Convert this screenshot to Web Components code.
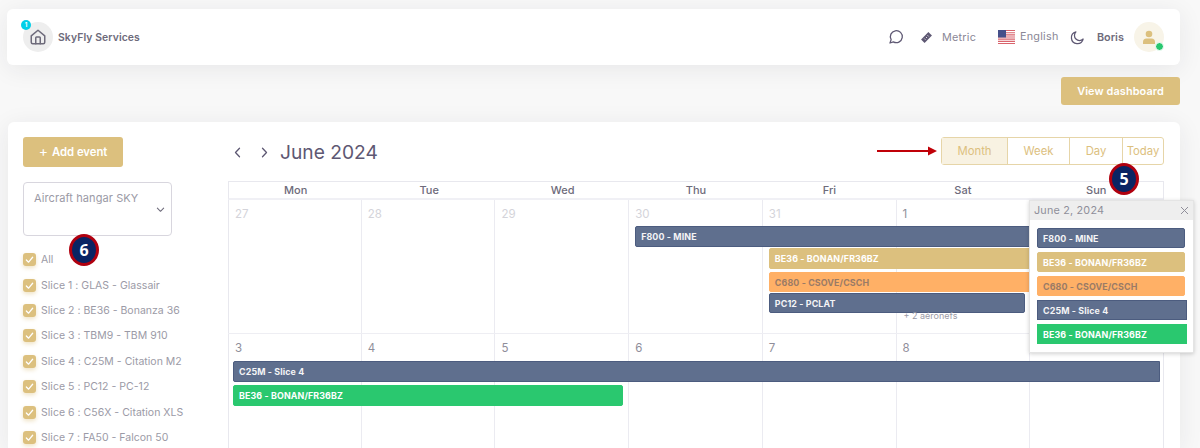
<!DOCTYPE html>
<html><head><meta charset="utf-8">
<style>
html,body{margin:0;height:448px;overflow:hidden;background:#f8f8f8}
body{font-family:Inter,"Liberation Sans",sans-serif;color:#6e6b7b;position:relative}
page-shell{display:block}
</style></head><body>
<page-shell>
  <top-nav></top-nav>
  <dash-action>View dashboard</dash-action>
  <main-card>
    <side-filter slot="side">
      <check-item>All</check-item>
      <check-item>Slice 1 : GLAS - Glassair</check-item>
      <check-item>Slice 2 : BE36 - Bonanza 36</check-item>
      <check-item>Slice 3 : TBM9 - TBM 910</check-item>
      <check-item>Slice 4 : C25M - Citation M2</check-item>
      <check-item>Slice 5 : PC12 - PC-12</check-item>
      <check-item>Slice 6 : C56X - Citation XLS</check-item>
      <check-item>Slice 7 : FA50 - Falcon 50</check-item>
    </side-filter>
    <cal-toolbar slot="main"></cal-toolbar>
    <cal-head slot="main"></cal-head>
    <cal-week slot="main" days="27,28,29,30,31,1," muted="5" rows="26px 22px 24px 21px 22px 18px 1fr" h="134">
      <cal-event col="4" end="8" row="2" kind="navy" l="6">F800 - MINE</cal-event>
      <cal-event col="5" end="8" row="3" kind="gold" l="6">BE36 - BONAN/FR36BZ</cal-event>
      <cal-event col="5" end="8" row="4" kind="orange" l="6">C680 - CSOVE/CSCH</cal-event>
      <cal-event col="5" end="7" row="5" kind="navy" l="6" r="5" round="1">PC12 - PCLAT</cal-event>
      <more-link col="6" row="6">+ 2 aéronefs</more-link>
    </cal-week>
    <cal-week slot="main" days="3,4,5,6,7,8," muted="0" rows="27px 24px 24px 1fr" h="140">
      <cal-event col="1" end="8" row="2" kind="navy" l="5" r="4">C25M - Slice 4</cal-event>
      <cal-event col="1" end="4" row="3" kind="green" l="5" r="6" round="1">BE36 - BONAN/FR36BZ</cal-event>
    </cal-week>
  </main-card>
</page-shell>
<red-arrow></red-arrow>
<num-badge style="left:1109px;top:163px">5</num-badge>
<num-badge style="left:69px;top:234px">6</num-badge>
<day-popover>
  <cal-event kind="navy" round="1" pop="1">F800 - MINE</cal-event>
  <cal-event kind="gold" round="1" pop="1">BE36 - BONAN/FR36BZ</cal-event>
  <cal-event kind="orange" round="1" pop="1">C680 - CSOVE/CSCH</cal-event>
  <cal-event kind="navy" pop="1" wide="1">C25M - Slice 4</cal-event>
  <cal-event kind="green" pop="1" wide="1">BE36 - BONAN/FR36BZ</cal-event>
</day-popover>
<script>
const mk=(name,html)=>{
  class C extends HTMLElement{
    constructor(){super();this.attachShadow({mode:'open'}).innerHTML=html;}
  }
  customElements.define(name,C);
};
const FONT='Inter,"Liberation Sans",sans-serif';

mk('top-nav',`<style>
:host{display:flex;align-items:center;height:56px;margin:9px 20px 0 7px;background:#fff;border-radius:6px;box-shadow:0 4px 24px rgba(34,41,47,.08);padding:0 16px;box-sizing:content-box;width:1141px;font-size:11px}
.home{position:relative;width:30px;height:30px;border-radius:50%;background:#eee;display:flex;align-items:center;justify-content:center}
.dot1{position:absolute;left:-2px;top:-2px;width:10px;height:10px;border-radius:50%;background:#00cfe8;color:#fff;font:700 6px/10px ${FONT};text-align:center}
.brand{margin-left:5px;font-weight:600;font-size:10.4px;color:#6e6b7b;letter-spacing:.1px}
.r{margin-left:auto;display:flex;align-items:center}
.t{color:#8a8796;font-size:10.8px;letter-spacing:.25px}
svg{display:block}
.av{position:relative;width:30px;height:30px;border-radius:50%;background:#f8f4e8;display:flex;align-items:center;justify-content:center;margin-left:10px}
.on{position:absolute;right:0;bottom:1px;width:7px;height:7px;border-radius:50%;background:#28c76f;border:1px solid #fff}
</style>
<div class="home"><span class="dot1">1</span>
<svg width="18" height="18" viewBox="0 0 24 24" fill="none" stroke="#6e6b7b" stroke-width="2" stroke-linejoin="round" stroke-linecap="round"><path d="M3 10.5 12 3l9 7.5V19a2 2 0 0 1-2 2H5a2 2 0 0 1-2-2z"/><path d="M9 21v-8a1 1 0 0 1 1-1h4a1 1 0 0 1 1 1v8"/></svg></div>
<span class="brand">SkyFly Services</span>
<div class="r">
<svg width="16" height="16" viewBox="0 0 24 24" fill="none" stroke="#5e5873" stroke-width="1.900" stroke-linejoin="round" stroke-linecap="round"><path d="M3 21l1.700-5A9 9 0 1 1 8 19.300z"/></svg>
<svg style="margin-left:16px" width="13" height="13" viewBox="0 0 24 24"><path fill="#5e5873" d="M15.500 2 22 8.500 8.500 22 2 15.500z"/><path stroke="#fff" stroke-width="1.500" d="M14 8l2 2M11 11l2 2M8 14l2 2"/></svg>
<span class="t" style="margin-left:9px;width:34px">Metric</span>
<svg style="margin-left:22px" width="17" height="14" viewBox="0 0 17 14"><rect width="17" height="14" fill="#fff"/><path fill="#d9636c" d="M0 0h17v1.100H0zM0 2.200h17v1.100H0zM0 4.300h17v1.100H0zM0 6.500h17v1.100H0zM0 8.600h17v1.100H0zM0 10.800h17v1.100H0zM0 12.900h17V14H0z"/><rect width="8" height="7.500" fill="#46508a"/></svg>
<span class="t" style="margin:-2px 0 0 5px;width:39px">English</span>
<svg style="margin-left:11px" width="15" height="15" viewBox="0 0 24 24" fill="none" stroke="#5e5873" stroke-width="2" stroke-linejoin="round" stroke-linecap="round"><path d="M21 14.500A9.500 9.500 0 1 1 9.500 3 7.500 7.500 0 0 0 21 14.500z"/></svg>
<span style="margin-left:12px;font-weight:600;font-size:10.8px;color:#6e6b7b;width:27px">Boris</span>
<div class="av"><svg width="14" height="15" viewBox="0 0 14 15"><circle cx="7" cy="4" r="3.300" fill="#dcc07e"/><path fill="#dcc07e" d="M1 14v-2a3.500 3.500 0 0 1 3.500-3.500h5A3.500 3.500 0 0 1 13 12v2z"/></svg><span class="on"></span></div>
</div>`);

mk('dash-action',`<style>
:host{display:block;width:119px;height:28px;margin:12px 0 0 1061px;background:#dcc07e;border-radius:3px;color:#fff;font-weight:600;font-size:10.9px;line-height:28px;text-align:center;letter-spacing:.1px}
</style><slot></slot>`);

mk('main-card',`<style>
:host{display:grid;grid-template-columns:205px 936px;height:311px;overflow:hidden;margin:17px 20px 0 8px;background:#fff;border-radius:6px 6px 0 0;box-shadow:0 4px 24px rgba(34,41,47,.08);padding:15px 16px 0 15px;box-sizing:content-box;width:1141px}
.m{display:flex;flex-direction:column}
</style><div><slot name="side"></slot></div><div class="m"><slot name="main"></slot></div>`);

mk('side-filter',`<style>
:host{display:block}
.add{width:100px;height:30px;background:#dcc07e;border-radius:3px;color:#fff;font-weight:600;font-size:11.3px;display:flex;align-items:center;justify-content:center;gap:4px}
.plus{font-weight:400;font-size:14px;line-height:14px;margin-top:-2px}
.sel{position:relative;width:149px;height:54px;box-sizing:border-box;border:1px solid #d8d6de;border-radius:4px;margin:15px 0 11px;padding:8px 10px;font-size:11px;color:#9b9aa6;letter-spacing:.1px}
.sel svg{position:absolute;right:6px;top:22px}
</style><div class="add"><span class="plus">+</span>Add event</div>
<div class="sel">Aircraft hangar SKY<svg width="9" height="9" viewBox="0 0 10 10" fill="none" stroke="#6e6b7b" stroke-width="1.200" stroke-linecap="round" stroke-linejoin="round"><path d="M1.500 3.500 5 7l3.500-3.500"/></svg></div>
<slot></slot>`);

mk('check-item',`<style>
:host{display:flex;align-items:center;height:25.4px;font-size:10.5px;color:#9b9aa6;letter-spacing:.02px;white-space:nowrap}
.b{width:13px;height:13px;border-radius:3px;background:#dcc07e;box-shadow:0 2px 4px rgba(220,192,126,.45);margin:0 5px 0 0;display:flex;align-items:center;justify-content:center}
</style><span class="b"><svg width="9" height="9" viewBox="0 0 10 10" fill="none" stroke="#fff" stroke-width="1.400" stroke-linecap="round" stroke-linejoin="round"><path d="M1.500 5.500 4 8l4.500-5.500"/></svg></span><slot></slot>`);

mk('cal-toolbar',`<style>
:host{display:flex;align-items:center;height:30px;margin-bottom:14px;position:relative}
.n{display:flex;align-items:center;color:#5e5873}
svg{display:block}
h2{margin:0 0 0 11px;font-weight:400;font-size:19.2px;color:#5e5873;letter-spacing:0}
.g{margin-left:auto;align-self:flex-start;display:flex;height:28px;border:1px solid #e6d5a8;border-radius:3px;color:#dcc07e;font-size:11.3px;text-align:center;box-sizing:border-box;line-height:26px}
.g span{border-left:1px solid #e6d5a8;box-sizing:border-box}
.g span:first-child{border-left:0;background:#f8f2e2}
</style><div class="n" style="margin-left:5px">
<svg width="9" height="11" viewBox="0 0 9 11" fill="none" stroke="#5e5873" stroke-width="1.300" stroke-linecap="round" stroke-linejoin="round"><path d="M6.500 1.200 2.500 5.500l4 4.300"/></svg>
<svg style="margin-left:18px" width="9" height="11" viewBox="0 0 9 11" fill="none" stroke="#5e5873" stroke-width="1.300" stroke-linecap="round" stroke-linejoin="round"><path d="M2.500 1.200 6.500 5.500l-4 4.300"/></svg>
</div><h2>June 2024</h2>
<div class="g"><span style="width:65px">Month</span><span style="width:62px">Week</span><span style="width:53px">Day</span><span style="width:41px">Today</span></div>`);

mk('cal-head',`<style>
:host{display:grid;grid-template-columns:repeat(7,1fr);height:19px;border:1px solid #e8e8ee;border-bottom:2px solid #f0f0f5;box-sizing:border-box;font-size:11px;font-weight:500;line-height:17px;text-align:center;color:#6e6b7b}
</style><span>Mon</span><span>Tue</span><span>Wed</span><span>Thu</span><span>Fri</span><span>Sat</span><span>Sun</span>`);

class CalWeek extends HTMLElement{
  constructor(){super();
    const days=this.getAttribute('days').split(','),muted=+this.getAttribute('muted');
    const rows=this.getAttribute('rows');
    const h=this.getAttribute('h');
    const cells=days.map((d,i)=>`<div class="c" style="grid-column:${i+1};${i===0?'border-left:1px solid #e8e8ee':''}"><span class="${i<muted?'m':''}">${d}</span></div>`).join('');
    this.attachShadow({mode:'open'}).innerHTML=`<style>
:host{display:grid;grid-template-columns:repeat(7,1fr);grid-template-rows:${rows};height:${h}px;border-bottom:1px solid #eeeef3;box-shadow:inset -1px 0 #e8e8ee;box-sizing:border-box;position:relative}
.c{grid-row:1/-1;border-right:1px solid #ebebf1;padding:7px 0 0 6px;font-size:11.5px;color:#8f8e9a;line-height:14px;box-sizing:border-box}
.c:last-of-type{border-right:0}
.m{color:#d4d4da}
</style>${cells}<slot></slot>`;
  }
}
customElements.define('cal-week',CalWeek);

const KINDS={navy:['#5f6f8e','#4c5c7f','#f4f4f6'],gold:['#dcc07e','#dcc07e','#fff'],orange:['#ffb066','#ffb066','#9a7b66'],green:['#2ac86f','#2ac86f','#fff']};
class CalEvent extends HTMLElement{
  constructor(){super();
    const k=KINDS[this.getAttribute('kind')];
    const a=n=>this.getAttribute(n);
    const pop=a('pop');
    const st=pop?`margin:0 ${a('wide')?'6px':'8px'} 4px 0;height:20px;`
      :`grid-column:${a('col')}/${a('end')};grid-row:${a('row')};margin:0 ${a('r')||0}px 0 ${a('l')||0}px;height:${a('row')==='4'||a('row')==='5'?'20px':'21px'};align-self:start;`;
    this.attachShadow({mode:'open'}).innerHTML=`<style>
:host{display:block;box-sizing:border-box;z-index:1;background:${k[0]};border:1px solid ${k[1]};border-radius:${a('round')?'2px':pop?'0':'2px 0 0 2px'};color:${k[2]};font-size:8.9px;font-weight:700;line-height:19px;padding-left:5px;white-space:nowrap;letter-spacing:.12px;overflow:hidden;${st}}
</style><slot></slot>`;
  }
}
customElements.define('cal-event',CalEvent);

class MoreLink extends HTMLElement{
  constructor(){super();
    this.style.cssText=`grid-column:${this.getAttribute('col')};grid-row:${this.getAttribute('row')};`;
    this.attachShadow({mode:'open'}).innerHTML=`<style>:host{display:block;font-size:9px;color:#9b9aa6;padding-left:7px;line-height:10px;margin-top:-4px;z-index:1}</style><slot></slot>`;
  }
}
customElements.define('more-link',MoreLink);

mk('red-arrow',`<style>:host{position:absolute;left:877px;top:146px;display:block;width:60px;height:10px}svg{display:block}</style>
<svg width="60" height="10" viewBox="0 0 60 10"><path d="M0 4h51V0.500L60 5l-9 4.500V6H0z" fill="#c00008"/></svg>`);

mk('num-badge',`<style>
:host{position:absolute;display:flex;align-items:center;justify-content:center;width:30px;height:32px;box-sizing:border-box;border:3px solid #b0000f;border-radius:50%;background:#0a2463;color:#fff;font:700 16px "Open Sans",sans-serif;z-index:3}
</style><slot></slot>`);

mk('day-popover',`<style>
:host{position:absolute;left:1029px;top:200px;width:165px;height:153px;box-sizing:border-box;display:block;background:#fff;border:1px solid #e4e4e4;box-shadow:0 1px 4px rgba(0,0,0,.18);z-index:2}
.h{display:flex;align-items:center;justify-content:space-between;height:19px;background:#eee;padding:0 4px;font-size:10.8px;color:#8f8e9a;letter-spacing:.2px}
.b{padding:8px 0 0 7px;display:block}
</style><div class="h"><span>June 2, 2024</span><svg width="9" height="9" viewBox="0 0 9 9" stroke="#8f8e9a" stroke-width="1"><path d="M1 1l7 7M8 1 1 8"/></svg></div><div class="b"><slot></slot></div>`);
</script>
</body></html>
